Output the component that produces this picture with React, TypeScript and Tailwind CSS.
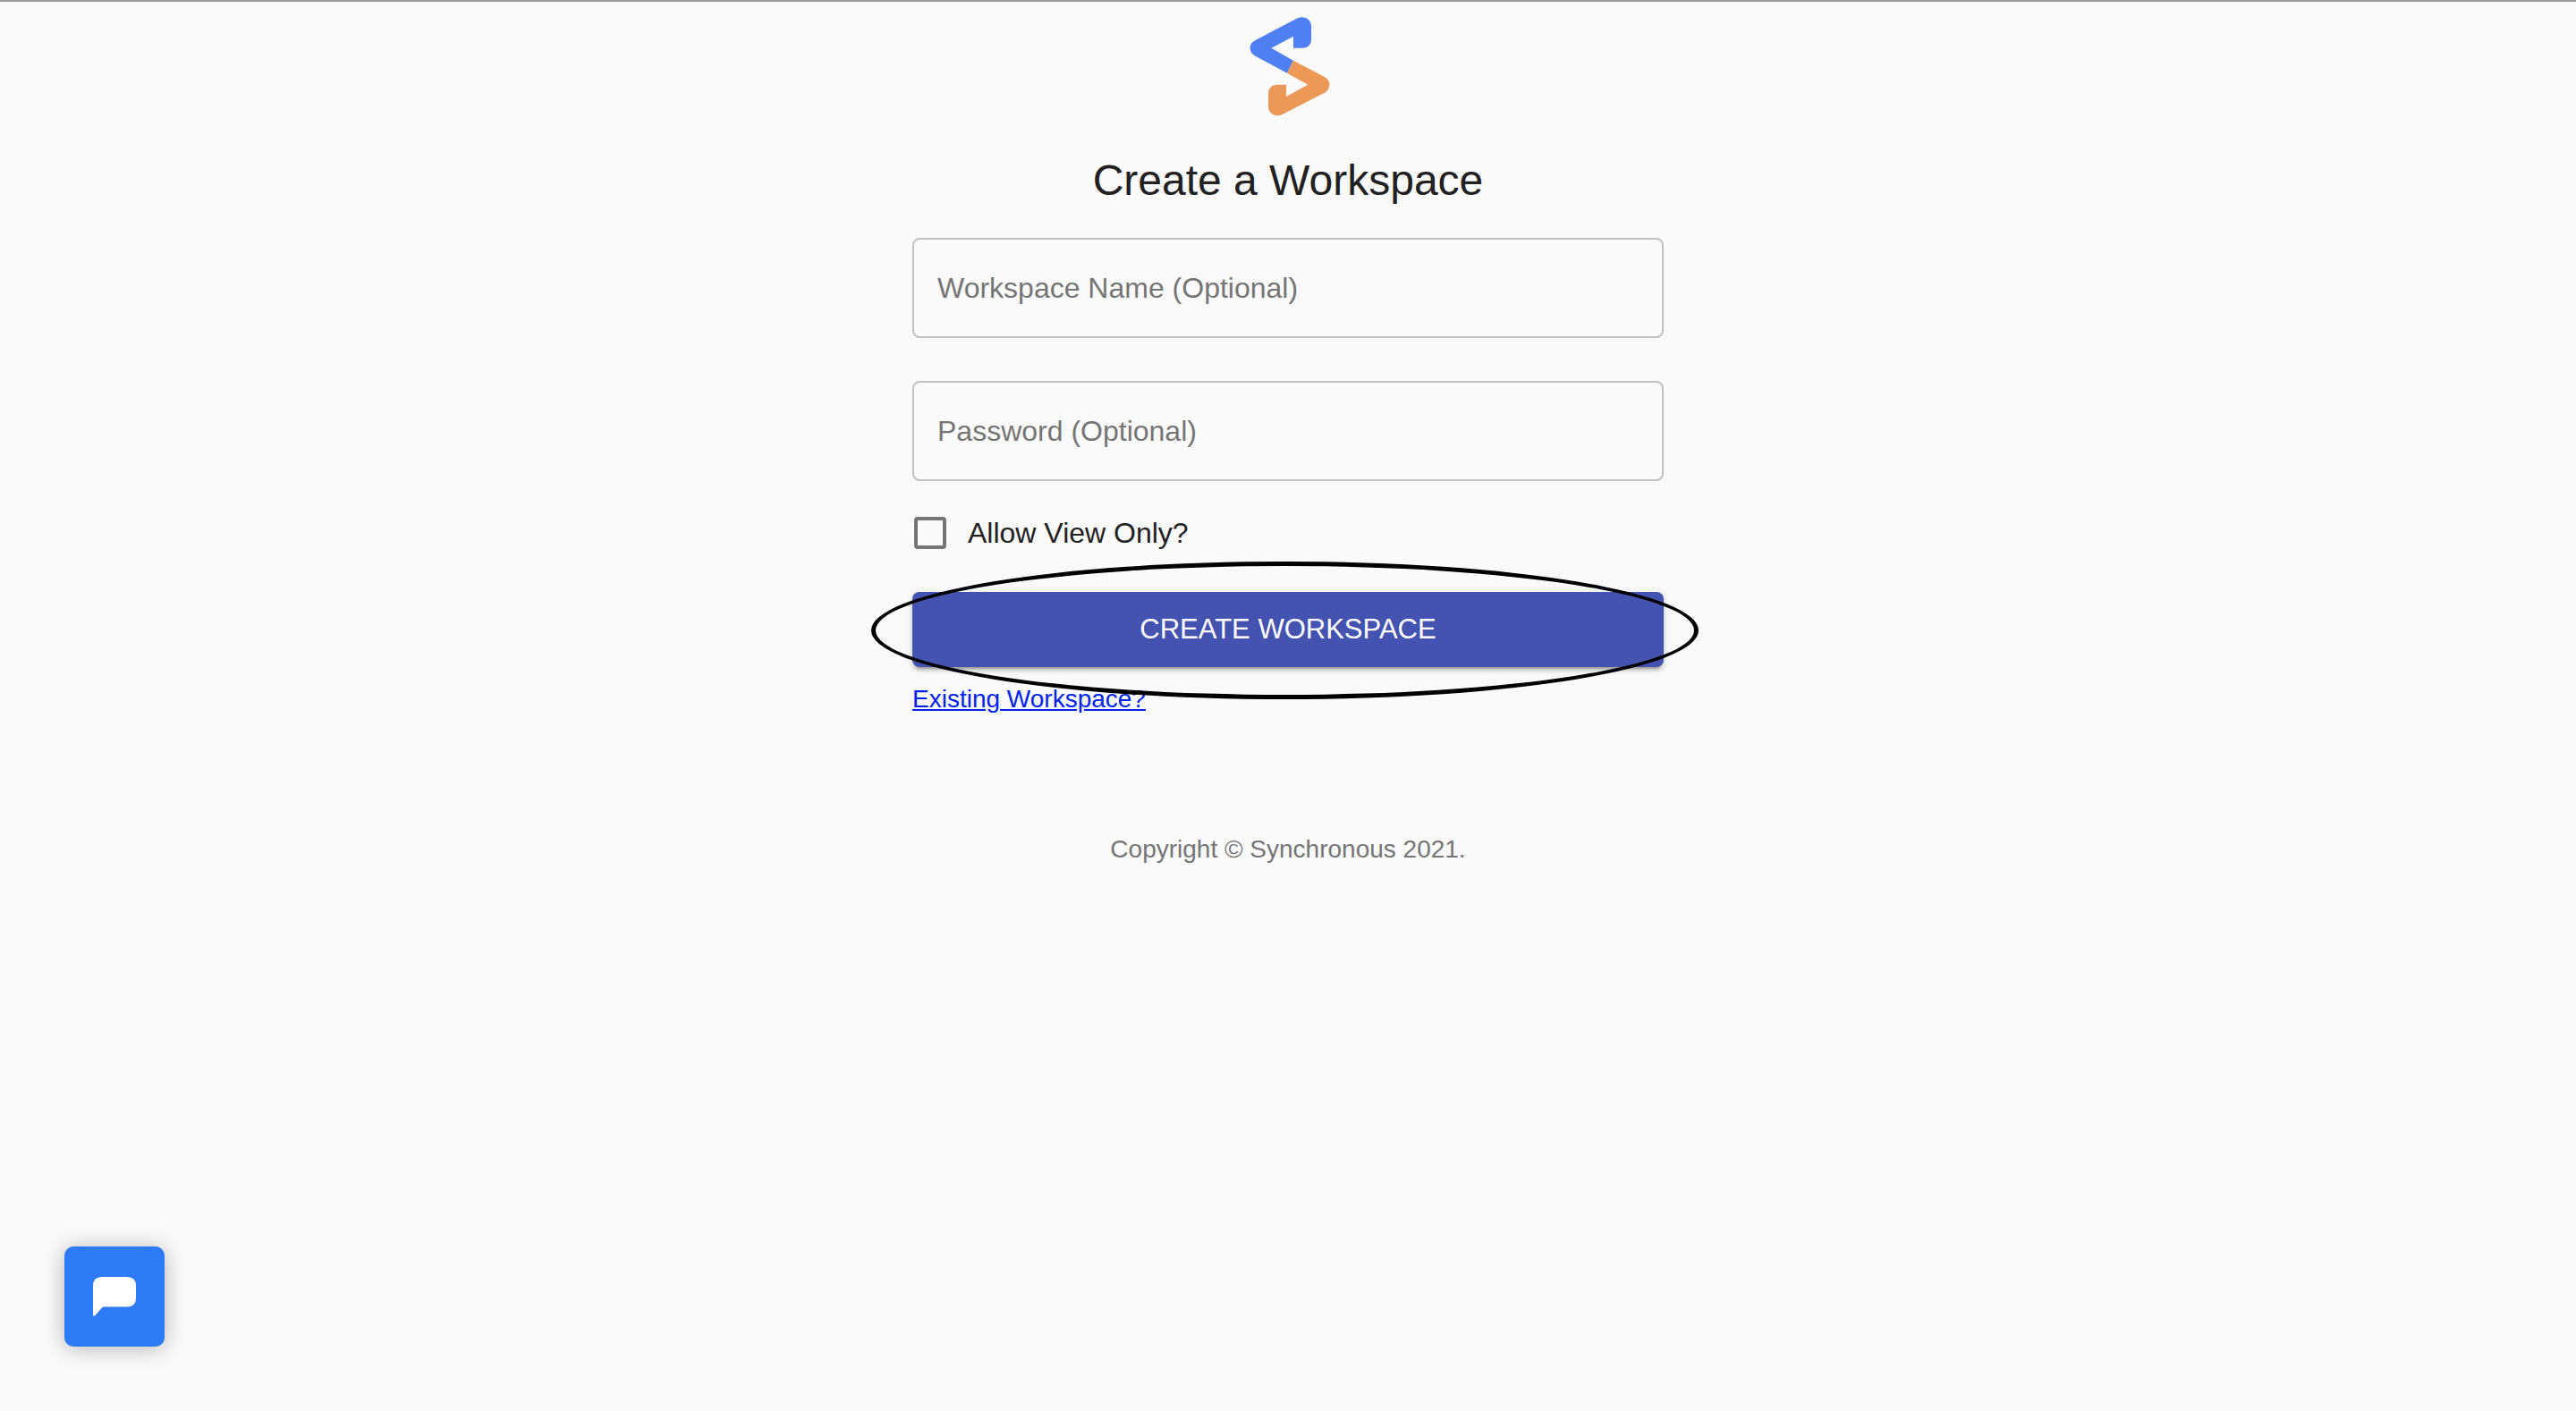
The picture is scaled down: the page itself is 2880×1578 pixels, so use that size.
import { useState } from "react";

function Logo() {
  return (
    <svg
      viewBox="39 54 282 336"
      className="h-[112px] w-[94px] overflow-visible"
      role="img"
      aria-label="Synchronous"
    >
      <path
        fill="#4f7ff1"
        d="M198 203 L177 245 L72 189 C59 182 53 173 53 161 C53 149 59 141 72 134 L212 61 C234 51 258 64 258 88 V131 C258 149 247 161 228 161 H198 V122 L124 161 Z"
      />
      <path
        fill="#ec9856"
        d="M198 203 L301 257 C313 263 319 272 319 284 C319 296 313 305 301 312 L161 384 C137 396 114 380 114 358 V314 C114 296 126 284 144 284 H174 V324 L247 284 L177 245 Z"
      />
      <path fill="#ec9856" opacity="0.4" d="M131 406 Q137 411 142 408 Q136 408 131 406 Z" />
    </svg>
  );
}

type FieldProps = { id: string; label: string; type: string };

function OutlinedField({ id, label, type }: FieldProps) {
  return (
    <div className="relative">
      <input
        id={id}
        type={type}
        placeholder=" "
        className="peer block h-28 w-full rounded-lg border-2 border-[#c1c1c1] bg-transparent px-[26px] text-[32px] text-[#212121] outline-none focus:border-[#4453b0]"
      />
      <label
        htmlFor={id}
        className="pointer-events-none absolute inset-y-0 left-7 hidden items-center text-[32px] text-[#757575] peer-placeholder-shown:flex"
      >
        {label}
      </label>
    </div>
  );
}

export default function App() {
  const [viewOnly, setViewOnly] = useState(false);

  return (
    <div className="min-h-screen border-t-2 border-[#999999] bg-[#fafafa] font-['Liberation_Sans',Arial,sans-serif] text-[#212121]">
      <main className="mx-auto flex w-full max-w-[840px] flex-col items-center pt-4">
        <Logo />
        <h1 className="mt-10 text-[48px] leading-[64px]">Create a Workspace</h1>

        <form className="mt-8 w-full" onSubmit={(e) => e.preventDefault()}>
          <div className="flex flex-col gap-12">
            <OutlinedField id="workspace-name" label="Workspace Name (Optional)" type="text" />
            <OutlinedField id="password" label="Password (Optional)" type="password" />
          </div>

          <label className="mt-4 flex h-[84px] w-fit items-center gap-6 pl-0.5 text-[32px]">
            <input
              type="checkbox"
              checked={viewOnly}
              onChange={(e) => setViewOnly(e.target.checked)}
              className="size-9 appearance-none rounded-sm border-4 border-[#757575] checked:bg-[#4453b0]"
            />
            Allow View Only?
          </label>

          <div className="relative mt-6">
            <button
              type="submit"
              className="block h-[84px] w-full rounded-lg bg-[#4453b0] text-[31px] text-white uppercase shadow-[0_6px_2px_-4px_rgba(0,0,0,0.2),0_4px_4px_0_rgba(0,0,0,0.14),0_2px_10px_0_rgba(0,0,0,0.12)]"
            >
              Create Workspace
            </button>
            <div className="pointer-events-none absolute -top-[34px] -right-[39px] -bottom-9 -left-[46px] z-10 rounded-[50%] border-5 border-black" />
          </div>
        </form>

        <a
          href="#existing"
          className="mt-4 self-start text-[28px] leading-10 text-[#0023e8] underline"
        >
          Existing Workspace?
        </a>

        <footer className="mt-32 text-[28px] leading-10 text-[#757575]">
          Copyright © Synchronous 2021.
        </footer>
      </main>

      <button
        type="button"
        aria-label="Open chat"
        className="fixed bottom-[72px] left-[72px] flex size-28 items-center justify-center rounded-[10px] bg-[#2f7af6] shadow-[0_2px_26px_rgba(0,0,0,0.28)]"
      >
        <svg viewBox="0 0 48 44" className="h-11 w-12" fill="white" aria-hidden="true">
          <path d="M10 0 H38 Q48 0 48 10 V24 Q48 33.500 38 33.500 H11 L2 43.500 Q0 44.500 0 42 V10 Q0 0 10 0 Z" />
        </svg>
      </button>
    </div>
  );
}
